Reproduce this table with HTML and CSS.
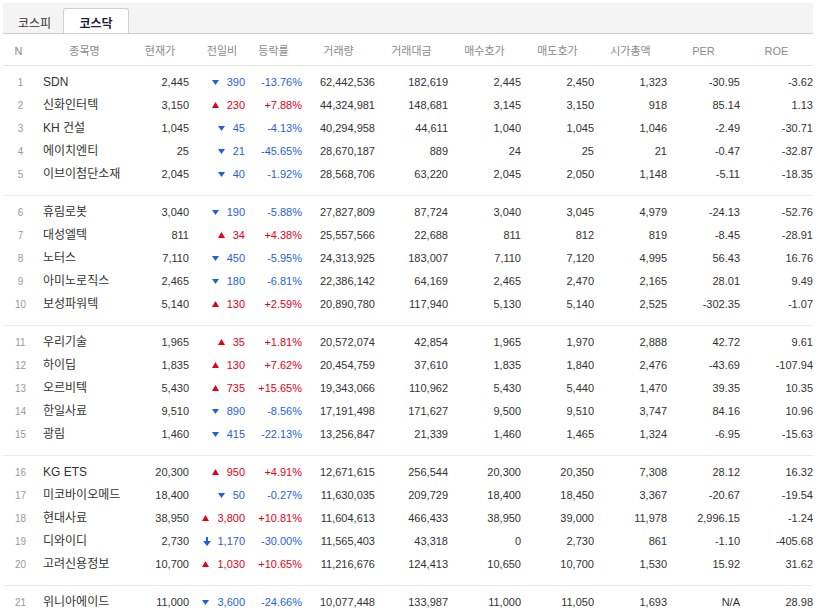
FILE: index.html
```html
<!DOCTYPE html>
<html lang="ko">
<head>
<meta charset="utf-8">
<title>코스닥 거래량 상위</title>
<link rel="stylesheet" href="styles.css">
</head>
<body>
<div class="wrap">
  <div class="tabs">
    <div class="tab first">코스피</div>
    <div class="tab active">코스닥</div>
  </div>
  <div class="row head">
    <div class="c-n">N</div>
    <div>종목명</div>
    <div>현재가</div>
    <div class="h-chg">전일비</div>
    <div>등락률</div>
    <div>거래량</div>
    <div>거래대금</div>
    <div>매수호가</div>
    <div>매도호가</div>
    <div>시가총액</div>
    <div>PER</div>
    <div>ROE</div>
  </div>

  <div class="group">
    <div class="row"><div class="c-n">1</div><div class="c-name">SDN</div><div>2,445</div><div class="dn"><svg class="ar" width="7" height="5" viewBox="0 0 7 5"><polygon points="0,0 7,0 3.5,5"/></svg>390</div><div class="dn">-13.76%</div><div>62,442,536</div><div>182,619</div><div>2,445</div><div>2,450</div><div>1,323</div><div>-30.95</div><div>-3.62</div></div>
    <div class="row"><div class="c-n">2</div><div class="c-name">신화인터텍</div><div>3,150</div><div class="up"><svg class="ar" width="7" height="6" viewBox="0 0 7 6"><polygon points="3.5,0 7,6 0,6"/></svg>230</div><div class="up">+7.88%</div><div>44,324,981</div><div>148,681</div><div>3,145</div><div>3,150</div><div>918</div><div>85.14</div><div>1.13</div></div>
    <div class="row"><div class="c-n">3</div><div class="c-name">KH 건설</div><div>1,045</div><div class="dn"><svg class="ar" width="7" height="5" viewBox="0 0 7 5"><polygon points="0,0 7,0 3.5,5"/></svg>45</div><div class="dn">-4.13%</div><div>40,294,958</div><div>44,611</div><div>1,040</div><div>1,045</div><div>1,046</div><div>-2.49</div><div>-30.71</div></div>
    <div class="row"><div class="c-n">4</div><div class="c-name">에이치엔티</div><div>25</div><div class="dn"><svg class="ar" width="7" height="5" viewBox="0 0 7 5"><polygon points="0,0 7,0 3.5,5"/></svg>21</div><div class="dn">-45.65%</div><div>28,670,187</div><div>889</div><div>24</div><div>25</div><div>21</div><div>-0.47</div><div>-32.87</div></div>
    <div class="row"><div class="c-n">5</div><div class="c-name">이브이첨단소재</div><div>2,045</div><div class="dn"><svg class="ar" width="7" height="5" viewBox="0 0 7 5"><polygon points="0,0 7,0 3.5,5"/></svg>40</div><div class="dn">-1.92%</div><div>28,568,706</div><div>63,220</div><div>2,045</div><div>2,050</div><div>1,148</div><div>-5.11</div><div>-18.35</div></div>
  </div>

  <div class="group sep">
    <div class="row"><div class="c-n">6</div><div class="c-name">휴림로봇</div><div>3,040</div><div class="dn"><svg class="ar" width="7" height="5" viewBox="0 0 7 5"><polygon points="0,0 7,0 3.5,5"/></svg>190</div><div class="dn">-5.88%</div><div>27,827,809</div><div>87,724</div><div>3,040</div><div>3,045</div><div>4,979</div><div>-24.13</div><div>-52.76</div></div>
    <div class="row"><div class="c-n">7</div><div class="c-name">대성엘텍</div><div>811</div><div class="up"><svg class="ar" width="7" height="6" viewBox="0 0 7 6"><polygon points="3.5,0 7,6 0,6"/></svg>34</div><div class="up">+4.38%</div><div>25,557,566</div><div>22,688</div><div>811</div><div>812</div><div>819</div><div>-8.45</div><div>-28.91</div></div>
    <div class="row"><div class="c-n">8</div><div class="c-name">노터스</div><div>7,110</div><div class="dn"><svg class="ar" width="7" height="5" viewBox="0 0 7 5"><polygon points="0,0 7,0 3.5,5"/></svg>450</div><div class="dn">-5.95%</div><div>24,313,925</div><div>183,007</div><div>7,110</div><div>7,120</div><div>4,995</div><div>56.43</div><div>16.76</div></div>
    <div class="row"><div class="c-n">9</div><div class="c-name">아미노로직스</div><div>2,465</div><div class="dn"><svg class="ar" width="7" height="5" viewBox="0 0 7 5"><polygon points="0,0 7,0 3.5,5"/></svg>180</div><div class="dn">-6.81%</div><div>22,386,142</div><div>64,169</div><div>2,465</div><div>2,470</div><div>2,165</div><div>28.01</div><div>9.49</div></div>
    <div class="row"><div class="c-n">10</div><div class="c-name">보성파워텍</div><div>5,140</div><div class="up"><svg class="ar" width="7" height="6" viewBox="0 0 7 6"><polygon points="3.5,0 7,6 0,6"/></svg>130</div><div class="up">+2.59%</div><div>20,890,780</div><div>117,940</div><div>5,130</div><div>5,140</div><div>2,525</div><div>-302.35</div><div>-1.07</div></div>
  </div>

  <div class="group sep">
    <div class="row"><div class="c-n">11</div><div class="c-name">우리기술</div><div>1,965</div><div class="up"><svg class="ar" width="7" height="6" viewBox="0 0 7 6"><polygon points="3.5,0 7,6 0,6"/></svg>35</div><div class="up">+1.81%</div><div>20,572,074</div><div>42,854</div><div>1,965</div><div>1,970</div><div>2,888</div><div>42.72</div><div>9.61</div></div>
    <div class="row"><div class="c-n">12</div><div class="c-name">하이딥</div><div>1,835</div><div class="up"><svg class="ar" width="7" height="6" viewBox="0 0 7 6"><polygon points="3.5,0 7,6 0,6"/></svg>130</div><div class="up">+7.62%</div><div>20,454,759</div><div>37,610</div><div>1,835</div><div>1,840</div><div>2,476</div><div>-43.69</div><div>-107.94</div></div>
    <div class="row"><div class="c-n">13</div><div class="c-name">오르비텍</div><div>5,430</div><div class="up"><svg class="ar" width="7" height="6" viewBox="0 0 7 6"><polygon points="3.5,0 7,6 0,6"/></svg>735</div><div class="up">+15.65%</div><div>19,343,066</div><div>110,962</div><div>5,430</div><div>5,440</div><div>1,470</div><div>39.35</div><div>10.35</div></div>
    <div class="row"><div class="c-n">14</div><div class="c-name">한일사료</div><div>9,510</div><div class="dn"><svg class="ar" width="7" height="5" viewBox="0 0 7 5"><polygon points="0,0 7,0 3.5,5"/></svg>890</div><div class="dn">-8.56%</div><div>17,191,498</div><div>171,627</div><div>9,500</div><div>9,510</div><div>3,747</div><div>84.16</div><div>10.96</div></div>
    <div class="row"><div class="c-n">15</div><div class="c-name">광림</div><div>1,460</div><div class="dn"><svg class="ar" width="7" height="5" viewBox="0 0 7 5"><polygon points="0,0 7,0 3.5,5"/></svg>415</div><div class="dn">-22.13%</div><div>13,256,847</div><div>21,339</div><div>1,460</div><div>1,465</div><div>1,324</div><div>-6.95</div><div>-15.63</div></div>
  </div>

  <div class="group sep">
    <div class="row"><div class="c-n">16</div><div class="c-name">KG ETS</div><div>20,300</div><div class="up"><svg class="ar" width="7" height="6" viewBox="0 0 7 6"><polygon points="3.5,0 7,6 0,6"/></svg>950</div><div class="up">+4.91%</div><div>12,671,615</div><div>256,544</div><div>20,300</div><div>20,350</div><div>7,308</div><div>28.12</div><div>16.32</div></div>
    <div class="row"><div class="c-n">17</div><div class="c-name">미코바이오메드</div><div>18,400</div><div class="dn"><svg class="ar" width="7" height="5" viewBox="0 0 7 5"><polygon points="0,0 7,0 3.5,5"/></svg>50</div><div class="dn">-0.27%</div><div>11,630,035</div><div>209,729</div><div>18,400</div><div>18,450</div><div>3,367</div><div>-20.67</div><div>-19.54</div></div>
    <div class="row"><div class="c-n">18</div><div class="c-name">현대사료</div><div>38,950</div><div class="up"><svg class="ar" width="7" height="6" viewBox="0 0 7 6"><polygon points="3.5,0 7,6 0,6"/></svg>3,800</div><div class="up">+10.81%</div><div>11,604,613</div><div>466,433</div><div>38,950</div><div>39,000</div><div>11,978</div><div>2,996.15</div><div>-1.24</div></div>
    <div class="row"><div class="c-n">19</div><div class="c-name">디와이디</div><div>2,730</div><div class="dn"><svg class="ar lim" width="8" height="9" viewBox="0 0 8 9"><rect x="3" y="0" width="2" height="5"/><polygon points="0,4 8,4 4,9"/></svg>1,170</div><div class="dn">-30.00%</div><div>11,565,403</div><div>43,318</div><div>0</div><div>2,730</div><div>861</div><div>-1.10</div><div>-405.68</div></div>
    <div class="row"><div class="c-n">20</div><div class="c-name">고려신용정보</div><div>10,700</div><div class="up"><svg class="ar" width="7" height="6" viewBox="0 0 7 6"><polygon points="3.5,0 7,6 0,6"/></svg>1,030</div><div class="up">+10.65%</div><div>11,216,676</div><div>124,413</div><div>10,650</div><div>10,700</div><div>1,530</div><div>15.92</div><div>31.62</div></div>
  </div>

  <div class="group sep">
    <div class="row"><div class="c-n">21</div><div class="c-name">위니아에이드</div><div>11,000</div><div class="dn"><svg class="ar" width="7" height="5" viewBox="0 0 7 5"><polygon points="0,0 7,0 3.5,5"/></svg>3,600</div><div class="dn">-24.66%</div><div>10,077,448</div><div>133,987</div><div>11,000</div><div>11,050</div><div>1,693</div><div>N/A</div><div>28.98</div></div>
  </div>
</div>
</body>
</html>
```

FILE: styles.css
```css
html, body {
  margin: 0;
  padding: 0;
  background: #fff;
}

body {
  font-family: "Liberation Sans", "Noto Sans CJK KR", sans-serif;
  font-size: 11px;
  color: #333;
}

.wrap {
  padding: 3px 0 0 3px;
  width: 810px;
}

.tabs {
  display: flex;
  align-items: flex-end;
  height: 30px;
  background: #f4f4f4;
  border-bottom: 1px solid #cfcfcf;
}

.tab {
  font-family: "Noto Sans CJK KR", sans-serif;
  font-size: 12px;
  color: #333;
  text-align: center;
  height: 25px;
  line-height: 29px;
  box-sizing: border-box;
}

.tab.first {
  width: 60px;
  padding-left: 3px;
}

.tab.active {
  width: 66px;
  background: #fff;
  border: 1px solid #cfcfcf;
  border-bottom: none;
  border-radius: 3px 3px 0 0;
  font-weight: bold;
  color: #1e1e3c;
  line-height: 28px;
}

.row {
  display: grid;
  grid-template-columns: 35px 93px 58px 56px 57px repeat(7, 73px);
  height: 23px;
  line-height: 23px;
  white-space: nowrap;
}

.row > div {
  text-align: right;
}

.row.head {
  box-sizing: border-box;
  height: 32px;
  padding-top: 3px;
  line-height: 28px;
  color: #8a8a8a;
  border-bottom: 1px solid #e6e6e6;
}

.row.head > div {
  text-align: center;
}

.row.head .h-chg {
  padding-left: 10px;
}

.group {
  padding: 5px 0 9px;
}

.group.sep {
  border-top: 1px solid #ececec;
}

.row .c-n {
  text-align: center;
  font-size: 10px;
  color: #999;
}

.row.head .c-n {
  font-size: 11px;
  color: #8a8a8a;
  padding-right: 4px;
}

.row .c-name {
  text-align: left;
  padding-left: 5px;
  font-size: 12px;
  color: #333;
}

.dn {
  color: #1f5fe0;
}

.up {
  color: #e2001a;
}

.ar {
  display: inline-block;
  vertical-align: middle;
  margin-right: 8px;
  margin-top: -2px;
  fill: currentColor;
}

.ar.lim {
  margin-right: 6px;
}
```
